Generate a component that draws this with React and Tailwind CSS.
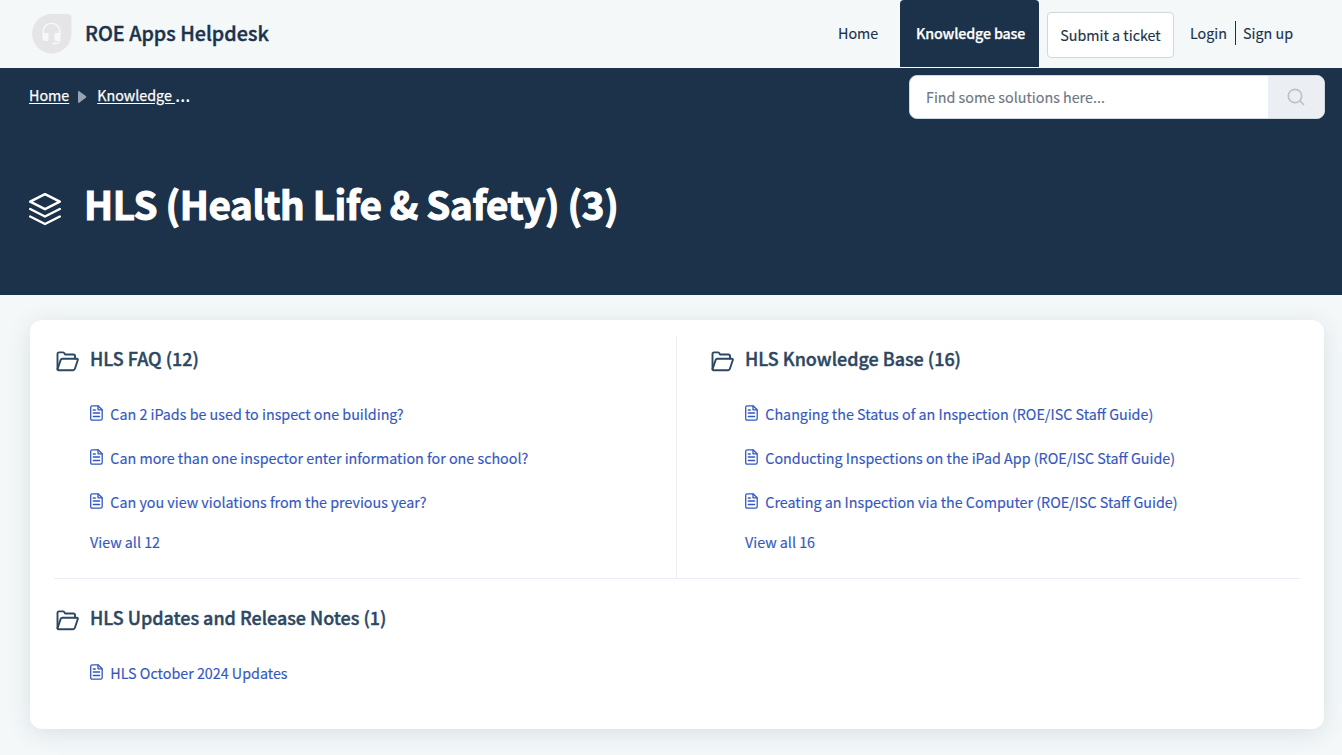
const FONT = "font-['Noto_Sans_CJK_SC','Noto_Sans',sans-serif]";

function FolderIcon() {
  return (
    <svg className="mt-1 ml-px h-6 w-6 shrink-0" viewBox="0 0 24 24" fill="none" stroke="#2c4762" strokeWidth="1.9" strokeLinejoin="round" strokeLinecap="round">
      <path d="M1.500 19.200V4.300c0-1 .6-1.900 1.600-1.900h3.800c.6 0 1 .2 1.300.7l.9 1.400h8.300c1 0 1.600.6 1.600 1.600V8.500" />
      <path d="M1.600 18.900 4.700 9.900c.3-.8.8-1.200 1.600-1.200h14.500c.9 0 1.300.5 1 1.300l-2.900 8.800c-.3.900-.9 1.400-1.800 1.400H2.600c-.8 0-1.200-.5-1-1.300Z" />
    </svg>
  );
}

function DocIcon() {
  return (
    <svg className="h-4 w-[13px] shrink-0" viewBox="0 0 13 16" fill="none" stroke="currentColor" strokeWidth="1.3" strokeLinejoin="round" strokeLinecap="round">
      <path d="M2.300.8h5.700l4.200 4V13.500c0 1.100-.6 1.700-1.700 1.700H2.300C1.200 15.200.7 14.600.7 13.500V2.400C.7 1.400 1.200.8 2.300.8Z" />
      <path d="M8 1v3.800h3.900M3.300 5h2M3.300 8h6.300M3.300 11.500h6.300" />
    </svg>
  );
}

function Category({ title, items, viewAll }) {
  return (
    <section>
      <div className="-mt-0.5 flex h-[34px] items-start gap-[10px]">
        <FolderIcon />
        <h2 className="text-[17.95px] leading-6 font-medium whitespace-nowrap text-[#2c4762] [-webkit-text-stroke:0.4px]">{title}</h2>
      </div>
      <ul className="mt-[23px] ml-[35px]">
        {items.map((item) => (
          <li key={item} className="flex h-11 items-start gap-[7.300px] text-[#3357c0]">
            <span className="pt-[2px]"><DocIcon /></span>
            <a className="text-[14.31px] leading-[22px] whitespace-nowrap">{item}</a>
          </li>
        ))}
      </ul>
      {viewAll && (
        <a className="-mt-1 ml-[35px] block text-[14.3px] leading-[22px] text-[#3357c0]">{viewAll}</a>
      )}
    </section>
  );
}

export default function App() {
  return (
    <div className={"flex h-[755px] w-[1342px] flex-col overflow-hidden bg-[#f4f8f9] text-[#1b324a] [-webkit-text-stroke:0.15px] " + FONT}>
      <header className="flex h-[68px] shrink-0 justify-between pl-8">
        <div className="flex items-center gap-[13px]">
          <svg className="h-10 w-10" viewBox="0 0 40 40" fill="none">
            <path d="M20 0h16c2 0 3.500 1.500 3.500 3.500V20A19.700 19.700 0 1 1 20 0Z" fill="#e5e5e7" />
            <path d="M11.200 20v-2.500a8.300 8.300 0 0 1 16.600 0V20M27.500 25v1c0 2.200-1.300 3.300-3.500 3.500" stroke="#f5f7f8" strokeWidth="1.500" />
            <path d="M10.400 19h4.600c.8 0 1.500.7 1.500 1.500v5c0 .8-.7 1.500-1.500 1.500h-1.600c-2 0-3-1-3-3Zm18.200 0H24c-.8 0-1.500.7-1.500 1.500v5c0 .8.7 1.500 1.500 1.500h1.600c2 0 3-1 3-3Z" fill="#f5f7f8" />
            <ellipse cx="22.300" cy="29.600" rx="2.200" ry="1.100" fill="#f5f7f8" />
          </svg>
          <span className="pb-0.5 text-[19.75px] leading-7 font-medium [-webkit-text-stroke:0.4px]">ROE Apps Helpdesk</span>
        </div>
        <nav className="flex items-start pr-[49px] text-[14.3px] leading-[22px] whitespace-nowrap">
          <a className="mt-[22px] w-[62px]">Home</a>
          <a className="flex h-[67px] w-[139px] rounded-t-sm bg-[#1b324a] pt-[22px] pl-4 font-medium tracking-[-0.18px] text-white [-webkit-text-stroke:0.25px]">Knowledge base</a>
          <a className="mt-3 ml-2 flex h-[46px] w-[127px] justify-center rounded-[4px] border border-[#cfd7df] bg-white pt-[11px]">Submit a ticket</a>
          <a className="mt-[22px] ml-4 w-[45px]">Login</a>
          <a className="mt-[21px] h-6 border-l border-[#1b324a] pt-px pl-[7px]">Sign up</a>
        </nav>
      </header>

      <div className="h-[227px] shrink-0 bg-[#1b324a] text-white">
        <div className="flex justify-between pt-[7px] pr-[17px] pl-[29px]">
          <div className="flex h-[22px] pt-[9px] text-[14.3px] leading-[22px] [-webkit-text-stroke:0.25px]">
            <a className="underline underline-offset-2">Home</a>
            <svg className="mt-[7px] ml-[9px] h-3 w-[9px]" viewBox="0 0 9 12"><path d="M0 1.200C0 .2.8-.2 1.600.4l6.200 4.700c.7.500.7 1.200 0 1.700l-6.200 4.800c-.8.600-1.600.2-1.600-.8Z" fill="#97a4b0" /></svg>
            <a className="ml-[10px] whitespace-pre underline underline-offset-2">{"Knowledge "}</a>
            <span className="font-['Noto_Sans',sans-serif] text-[19.500px] leading-[21px] [-webkit-text-stroke:0px]">…</span>
          </div>
          <div className="flex h-11 w-[416px] overflow-hidden rounded-lg border border-[#cfd7df] bg-white">
            <span className="flex-1 pt-[10px] pl-4 text-[14.3px] leading-[22px] text-[#6f7782]">Find some solutions here...</span>
            <span className="flex w-14 items-center justify-center bg-[#ebeff3]">
              <svg className="h-[18px] w-[18px]" viewBox="0 0 18 18" fill="none" stroke="#b8c2cc" strokeWidth="1.700" strokeLinecap="round"><circle cx="8" cy="8" r="6.700" /><path d="m13 13 3.500 3.500" /></svg>
            </span>
          </div>
        </div>
        <div className="mt-[57px] flex h-[60px] items-center pl-[28px]">
          <svg className="mt-[5px] h-[34px] w-[34px]" viewBox="0 0 34 34" fill="none" stroke="white" strokeWidth="2.500" strokeLinejoin="round" strokeLinecap="round">
            <path d="M17 2.200 31.800 9.700 17 17.200 2.200 9.700ZM2.200 17 17 24.500 31.800 17M2.200 24.500 17 32 31.800 24.500" />
          </svg>
          <h1 className="ml-[22px] pb-[7px] text-[38.5px] leading-[60px] font-bold tracking-[-0.36px] whitespace-nowrap [-webkit-text-stroke:1.1px]">HLS (Health Life &amp; Safety) (3)</h1>
        </div>
      </div>

      <main className="mt-[25px] ml-[30px] h-[409px] w-[1294px] shrink-0 rounded-xl bg-white px-6 shadow-[0_4px_24px_rgba(24,50,71,0.12)]">
        <div className="flex h-[259px] border-b border-[#ebeff3] pt-4">
          <div className="w-[623px] border-r border-[#ebeff3] pt-3 pl-px">
            <Category
              title="HLS FAQ (12)"
              items={["Can 2 iPads be used to inspect one building?", "Can more than one inspector enter information for one school?", "Can you view violations from the previous year?"]}
              viewAll="View all 12"
            />
          </div>
          <div className="flex-1 pt-3 pl-[33px]">
            <Category
              title="HLS Knowledge Base (16)"
              items={["Changing the Status of an Inspection (ROE/ISC Staff Guide)", "Conducting Inspections on the iPad App (ROE/ISC Staff Guide)", "Creating an Inspection via the Computer (ROE/ISC Staff Guide)"]}
              viewAll="View all 16"
            />
          </div>
        </div>
        <div className="pt-7 pl-px">
          <Category title="HLS Updates and Release Notes (1)" items={["HLS October 2024 Updates"]} />
        </div>
      </main>
    </div>
  );
}
